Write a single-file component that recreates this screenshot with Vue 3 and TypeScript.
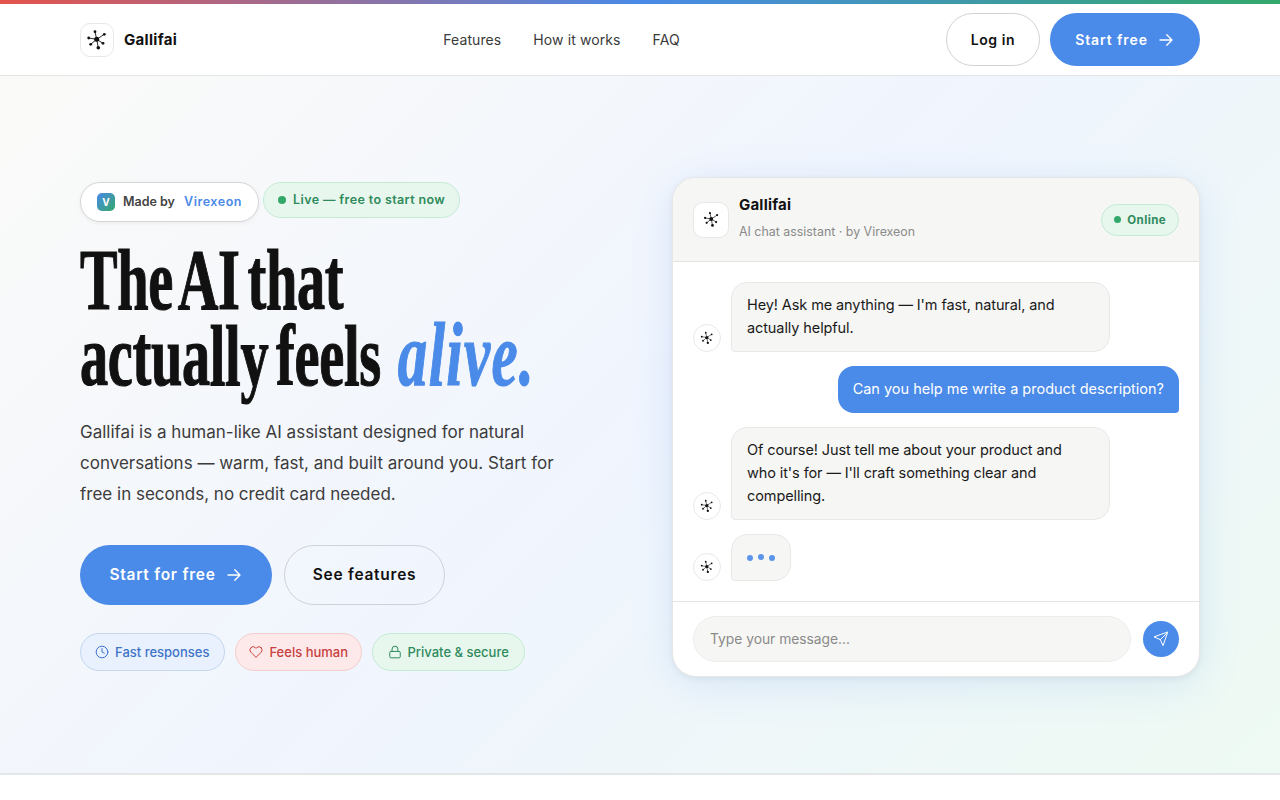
<template>
  <div class="page">
    <div class="rainbow"></div>
    <header class="nav">
      <div class="brand">
        <span class="logo">
          <svg width="22" height="22" viewBox="0 0 22 22"><use href="#hub" /></svg>
        </span>
        <span class="brand-name">Gallifai</span>
      </div>
      <nav class="links">
        <a v-for="l in links" :key="l">{{ l }}</a>
      </nav>
      <div class="nav-actions">
        <button class="btn-login">Log in</button>
        <button class="btn-start">
          Start free
          <svg class="arrow" width="18" height="18" viewBox="0 0 24 24"><path d="M4 12h16M13 5l7 7-7 7" /></svg>
        </button>
      </div>
    </header>

    <!-- shared logo symbol -->
    <svg width="0" height="0" class="defs">
      <symbol id="hub" viewBox="0 0 22 22">
        <g stroke="#111" stroke-width="0.9">
          <path d="M10.7 10.3 9 2.7M10.7 10.3l7.6-5M10.7 10.3 2.7 9M10.7 10.3l6.3 4M10.7 10.3l-6 5M10.7 10.3l1.6 8.4" />
        </g>
        <g fill="#111">
          <circle cx="10.7" cy="10.3" r="2.5" />
          <circle cx="9" cy="2.7" r="1.4" />
          <circle cx="18.3" cy="5.3" r="1.4" />
          <circle cx="2.7" cy="9" r="1.4" />
          <circle cx="17" cy="14.3" r="1.4" />
          <circle cx="4.7" cy="15.3" r="1.4" />
          <circle cx="12.3" cy="18.7" r="1.8" />
        </g>
      </symbol>
    </svg>

    <main class="hero">
      <section class="intro">
        <div class="badges">
          <span class="made">
            <span class="v">V</span>
            <span class="made-by">Made by</span>
            <span class="vendor">Virexeon</span>
          </span>
          <span class="live"><i class="dot"></i>Live — free to start now</span>
        </div>
        <h1>The AI that<br />actually feels <em>alive.</em></h1>
        <p class="lead">
          Gallifai is a human-like AI assistant designed for natural<br />
          conversations — warm, fast, and built around you. Start for<br />
          free in seconds, no credit card needed.
        </p>
        <div class="cta">
          <button class="btn-primary">
            Start for free
            <svg class="arrow" width="18" height="18" viewBox="0 0 24 24"><path d="M4 12h16M13 5l7 7-7 7" /></svg>
          </button>
          <button class="btn-ghost">See features</button>
        </div>
        <div class="chips">
          <span class="chip blue">
            <svg width="14" height="14" viewBox="0 0 24 24"><circle cx="12" cy="12" r="10" /><path d="M12 6v6l4 2" /></svg>
            Fast responses
          </span>
          <span class="chip red">
            <svg width="14" height="14" viewBox="0 0 24 24"><path d="M20.8 4.6a5.5 5.5 0 0 0-7.8 0L12 5.7l-1-1.1a5.5 5.5 0 0 0-7.8 7.8l1 1L12 21.2l7.8-7.8 1-1a5.5 5.5 0 0 0 0-7.8z" /></svg>
            Feels human
          </span>
          <span class="chip green">
            <svg width="14" height="14" viewBox="0 0 24 24"><rect x="3" y="11" width="18" height="11" rx="2" /><path d="M7 11V7a5 5 0 0 1 10 0v4" /></svg>
            Private &amp; secure
          </span>
        </div>
      </section>

      <section class="chat">
        <div class="chat-head">
          <span class="chat-logo">
            <svg width="17" height="17" viewBox="0 0 22 22"><use href="#hub" /></svg>
          </span>
          <div class="chat-title">
            <strong>Gallifai</strong>
            <small>AI chat assistant · by Virexeon</small>
          </div>
          <span class="online"><i class="dot small"></i>Online</span>
        </div>
        <div class="messages">
          <div v-for="(m, i) in messages" :key="i" class="row" :class="m.from">
            <span v-if="m.from === 'bot'" class="avatar">
              <svg width="14" height="14" viewBox="0 0 22 22"><use href="#hub" /></svg>
            </span>
            <div class="bubble">{{ m.text }}</div>
          </div>
          <div class="row bot">
            <span class="avatar">
              <svg width="14" height="14" viewBox="0 0 22 22"><use href="#hub" /></svg>
            </span>
            <div class="bubble typing"><i></i><i class="up"></i><i></i></div>
          </div>
        </div>
        <div class="composer">
          <div class="input">Type your message...</div>
          <button class="send">
            <svg width="16" height="16" viewBox="0 0 24 24"><path d="M22 2 11 13M22 2l-7 20-4-9-9-4z" /></svg>
          </button>
        </div>
      </section>
    </main>
    <div class="rest"></div>
  </div>
</template>

<script setup lang="ts">
const links: string[] = ['Features', 'How it works', 'FAQ']

const messages: { from: string; text: string }[] = [
  { from: 'bot', text: "Hey! Ask me anything — I'm fast, natural, and actually helpful." },
  { from: 'user', text: 'Can you help me write a product description?' },
  { from: 'bot', text: "Of course! Just tell me about your product and who it's for — I'll craft something clear and compelling." }
]
</script>

<style>
html,
body {
  margin: 0;
  background: #fff;
}
</style>

<style scoped>
.page {
  height: 800px;
  overflow: hidden;
  font-family: Inter, "Open Sans", sans-serif;
  color: #111;
}

.defs {
  position: absolute;
}

.rainbow {
  height: 4px;
  background: linear-gradient(90deg, #e5534b 0%, #4a8ae8 50%, #34a86b 100%);
}

.nav {
  height: 72px;
  box-sizing: border-box;
  padding: 0 80px;
  display: flex;
  justify-content: space-between;
  align-items: center;
  background: #fff;
  border-bottom: 1px solid #e4e4e4;
}

.brand {
  display: flex;
  align-items: center;
  gap: 10px;
}

.logo {
  width: 32px;
  height: 32px;
  border: 1px solid #e8e8e8;
  border-radius: 10px;
  display: flex;
  align-items: center;
  justify-content: center;
}

.brand-name {
  font-size: 15px;
  font-weight: 700;
  letter-spacing: 0.3px;
}

.links {
  display: flex;
  gap: 32px;
  font-size: 14px;
  letter-spacing: 0.1px;
  color: #3a3a3a;
}

.nav-actions {
  display: flex;
  gap: 10px;
}

button {
  font-family: inherit;
  cursor: pointer;
}

.arrow {
  fill: none;
  stroke: currentColor;
  stroke-width: 1.8;
  stroke-linecap: round;
  stroke-linejoin: round;
}

.btn-login {
  width: 94px;
  height: 53px;
  background: #fff;
  border: 1px solid #d2d2d2;
  border-radius: 27px;
  font-size: 14px;
  font-weight: 600;
  letter-spacing: 0.6px;
  color: #111;
}

.btn-start {
  width: 150px;
  height: 53px;
  border: none;
  border-radius: 27px;
  background: #4a8ae8;
  color: #fff;
  font-size: 14px;
  font-weight: 600;
  letter-spacing: 0.9px;
  display: flex;
  align-items: center;
  justify-content: center;
  gap: 9px;
}

.hero {
  height: 699px;
  box-sizing: border-box;
  padding: 5px 80px 0;
  display: flex;
  align-items: center;
  justify-content: space-between;
  background: linear-gradient(135deg, #fafaf8 0%, #f0f5fe 50%, #eefaf3 100%);
  border-bottom: 2px solid #e2e6e6;
}

.intro {
  width: 500px;
  margin-top: -2px;
}

.badges {
  display: flex;
  align-items: flex-start;
  gap: 4px;
}

.made {
  height: 40px;
  box-sizing: border-box;
  padding: 0 16px;
  display: flex;
  align-items: center;
  background: #fff;
  border: 1px solid #d6d6d6;
  border-radius: 20px;
  box-shadow: 0 1px 4px rgba(0, 0, 0, 0.06);
  font-size: 12.5px;
  font-weight: 600;
}

.v {
  width: 18px;
  height: 18px;
  border-radius: 5px;
  background: linear-gradient(135deg, #4a8ae8, #34a86b);
  color: #fff;
  font-size: 10px;
  font-weight: 700;
  display: flex;
  align-items: center;
  justify-content: center;
  margin-right: 8px;
}

.made-by {
  color: #444;
  margin-right: 9px;
}

.vendor {
  color: #4a8ae8;
  letter-spacing: 0.55px;
}

.live {
  height: 36px;
  box-sizing: border-box;
  padding: 0 14px;
  display: flex;
  align-items: center;
  gap: 7px;
  background: #e7f7ee;
  border: 1px solid #c4ebd4;
  border-radius: 18px;
  color: #2f8a5b;
  font-size: 12.5px;
  font-weight: 600;
  letter-spacing: 0.38px;
}

.dot {
  width: 8px;
  height: 8px;
  border-radius: 50%;
  background: #34a86b;
}

.dot.small {
  width: 7px;
  height: 7px;
}

/* no condensed display serif installed, so squeeze Liberation horizontally */
h1 {
  margin: 20px 0 0;
  font-family: "Liberation Serif", serif;
  font-size: 86px;
  line-height: 76px;
  font-weight: 700;
  letter-spacing: -0.5px;
  word-spacing: -9px;
  color: #111;
  white-space: nowrap;
  -webkit-text-stroke: 1.2px currentColor;
  transform: scaleX(0.655);
  transform-origin: left center;
}

h1 em {
  margin-left: 14px;
  color: #4a8ae8;
  font-size: 90px;
  line-height: 0;
  font-style: italic;
  font-weight: 700;
  letter-spacing: 2px;
}

.lead {
  margin: 23px 0 0;
  font-size: 17px;
  line-height: 31px;
  color: #3c3c3c;
  white-space: nowrap;
}

.cta {
  margin-top: 35px;
  display: flex;
  gap: 12px;
}

.btn-primary,
.btn-ghost {
  height: 60px;
  border-radius: 30px;
  font-size: 15.5px;
  font-weight: 600;
  letter-spacing: 0.75px;
}

.btn-primary {
  width: 192px;
  border: none;
  background: #4a8ae8;
  color: #fff;
  display: flex;
  align-items: center;
  justify-content: center;
  gap: 9px;
}

.btn-ghost {
  width: 161px;
  background: transparent;
  border: 1px solid #cfd2d8;
  color: #111;
}

.chips {
  margin-top: 28px;
  display: flex;
  gap: 10px;
}

.chip {
  height: 38px;
  box-sizing: border-box;
  display: flex;
  align-items: center;
  gap: 6px;
  border-radius: 19px;
  font-size: 13px;
  font-weight: 500;
  border: 1px solid;
}

.chip svg {
  fill: none;
  stroke: currentColor;
  stroke-width: 1.7;
  stroke-linecap: round;
  stroke-linejoin: round;
}

.chip.blue {
  padding: 0 15px 0 14px;
  background: #e8f1fd;
  border-color: #c5d6ef;
  color: #3f74c9;
}

.chip.red {
  padding: 0 13px;
  background: #fde9e9;
  border-color: #f6cccc;
  color: #c8403f;
}

.chip.green {
  padding: 0 15.5px 0 14.5px;
  background: #e7f7ee;
  border-color: #c4ebd4;
  color: #2f8a5b;
}

.chat {
  width: 528px;
  height: 500px;
  box-sizing: border-box;
  background: #fff;
  border: 1px solid #e6e6e6;
  border-radius: 24px;
  overflow: hidden;
  box-shadow: 0 8px 44px rgba(74, 138, 232, 0.14), 0 2px 6px rgba(0, 0, 0, 0.06);
  display: flex;
  flex-direction: column;
  flex: none;
}

.chat-head {
  height: 84px;
  flex: none;
  box-sizing: border-box;
  padding: 0 20px;
  display: flex;
  align-items: center;
  gap: 10px;
  background: #f6f6f4;
  border-bottom: 1px solid #e4e4e4;
}

.chat-logo {
  width: 36px;
  height: 36px;
  box-sizing: border-box;
  background: #fff;
  border: 1px solid #e8e8e8;
  border-radius: 10px;
  display: flex;
  align-items: center;
  justify-content: center;
}

.chat-title {
  flex: 1;
  display: flex;
  flex-direction: column;
  gap: 10px;
  margin-top: -5px;
}

.chat-title strong {
  font-size: 15px;
  font-weight: 700;
  letter-spacing: 0.2px;
}

.chat-title small {
  font-size: 12.4px;
  color: #8a8a8a;
}

.online {
  height: 32px;
  box-sizing: border-box;
  padding: 0 12px;
  display: flex;
  align-items: center;
  gap: 6px;
  background: #e7f7ee;
  border: 1px solid #c4ebd4;
  border-radius: 16px;
  color: #2f8a5b;
  font-size: 11.5px;
  font-weight: 700;
  letter-spacing: 0.4px;
}

.messages {
  flex: 1;
  min-height: 0;
  padding: 20px;
  display: flex;
  flex-direction: column;
  gap: 14px;
}

.row {
  display: flex;
  align-items: flex-end;
  gap: 10px;
}

.row.user {
  justify-content: flex-end;
}

.avatar {
  width: 28px;
  height: 28px;
  box-sizing: border-box;
  background: #fff;
  border: 1px solid #e8e8e8;
  border-radius: 50%;
  display: flex;
  align-items: center;
  justify-content: center;
  flex: none;
}

.bubble {
  box-sizing: border-box;
  font-size: 14.5px;
  line-height: 23px;
  border-radius: 16px;
}

.bot .bubble {
  width: 379px;
  padding: 10px 15px 12px;
  background: #f6f6f4;
  border: 1px solid #e8e8e8;
  border-bottom-left-radius: 4px;
  color: #1a1a1a;
  letter-spacing: -0.1px;
}

.user .bubble {
  padding: 11px 15px 13px;
  background: #4a8ae8;
  color: #fff;
  border-bottom-right-radius: 4px;
}

.bot .typing {
  width: 60px;
  height: 47px;
  padding: 0 0 0 15px;
  display: flex;
  align-items: center;
  gap: 5px;
}

.typing i {
  width: 6px;
  height: 6px;
  border-radius: 50%;
  background: #4a8ae8;
  opacity: 0.9;
}

.typing i.up {
  margin-top: -2px;
}

.composer {
  height: 75px;
  flex: none;
  box-sizing: border-box;
  padding: 0 20px;
  display: flex;
  align-items: center;
  gap: 12px;
  border-top: 1px solid #e4e4e4;
}

.input {
  flex: 1;
  height: 46px;
  box-sizing: border-box;
  padding: 0 16px;
  display: flex;
  align-items: center;
  background: #f6f6f4;
  border: 1px solid #ececec;
  border-radius: 23px;
  color: #8a8a8a;
  font-size: 13.8px;
}

.send {
  width: 36px;
  height: 36px;
  padding: 0;
  border: none;
  border-radius: 50%;
  background: #4a8ae8;
  display: flex;
  align-items: center;
  justify-content: center;
}

.send svg {
  fill: none;
  stroke: #fff;
  stroke-width: 1.5;
  stroke-linecap: round;
  stroke-linejoin: round;
}

.rest {
  height: 25px;
  background: #fff;
}
</style>
